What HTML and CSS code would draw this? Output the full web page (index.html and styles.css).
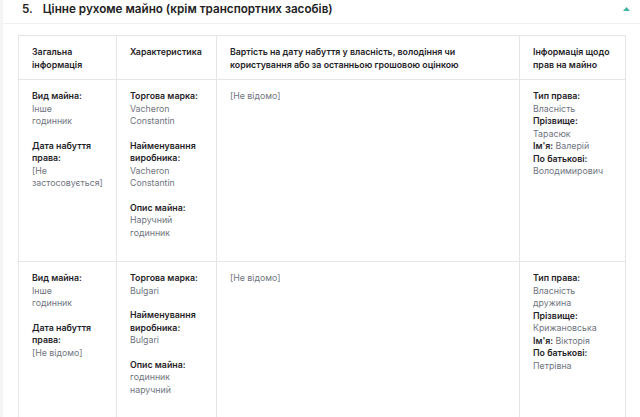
FILE: index.html
```html
<!DOCTYPE html>
<html lang="uk">
<head>
<meta charset="utf-8">
<link rel="stylesheet" href="styles.css">
</head>
<body>
<div class="page">
  <section class="card">
    <header class="card-head">
      <h2 class="title"><span class="num">5.</span>Цінне рухоме майно (крім транспортних засобів)</h2>
      <svg class="toggle" width="7" height="4" viewBox="0 0 7 4"><path d="M0 4 L3.5 0 L7 4 Z" fill="#3fb3a6"/></svg>
    </header>
    <div class="card-body">
      <table class="grid">
        <colgroup>
          <col class="c1"><col class="c2"><col class="c3"><col class="c4">
        </colgroup>
        <thead>
          <tr>
            <th>Загальна інформація</th>
            <th>Характеристика</th>
            <th>Вартість на дату набуття у власність, володіння чи користування або за останньою грошовою оцінкою</th>
            <th>Інформація щодо прав на майно</th>
          </tr>
        </thead>
        <tbody>
          <tr>
            <td>
              <div class="field stack"><span class="lbl">Вид майна:</span><span class="val">Інше<br>годинник</span></div>
              <div class="field stack"><span class="lbl">Дата набуття права:</span><span class="val">[Не застосовується]</span></div>
            </td>
            <td>
              <div class="field stack"><span class="lbl">Торгова марка:</span><span class="val">Vacheron Constantin</span></div>
              <div class="field stack"><span class="lbl">Найменування виробника:</span><span class="val">Vacheron Constantin</span></div>
              <div class="field stack"><span class="lbl">Опис майна:</span><span class="val">Наручний годинник</span></div>
            </td>
            <td><span class="val">[Не відомо]</span></td>
            <td>
              <div class="rights">
                <span class="lbl">Тип права:</span> <span class="val">Власність</span><br>
                <span class="lbl">Прізвище:</span> <span class="val">Тарасюк</span><br>
                <span class="lbl">Ім'я:</span> <span class="val">Валерій</span><br>
                <span class="lbl">По батькові:</span> <span class="val">Володимирович</span>
              </div>
            </td>
          </tr>
          <tr>
            <td>
              <div class="field stack"><span class="lbl">Вид майна:</span><span class="val">Інше<br>годинник</span></div>
              <div class="field stack"><span class="lbl">Дата набуття права:</span><span class="val">[Не відомо]</span></div>
            </td>
            <td>
              <div class="field stack"><span class="lbl">Торгова марка:</span><span class="val">Bulgari</span></div>
              <div class="field stack"><span class="lbl">Найменування виробника:</span><span class="val">Bulgari</span></div>
              <div class="field stack"><span class="lbl">Опис майна:</span><span class="val">годинник наручний</span></div>
            </td>
            <td><span class="val">[Не відомо]</span></td>
            <td>
              <div class="rights">
                <span class="lbl">Тип права:</span> <span class="val">Власність дружина</span><br>
                <span class="lbl">Прізвище:</span> <span class="val">Крижановська</span><br>
                <span class="lbl">Ім'я:</span> <span class="val">Вікторія</span><br>
                <span class="lbl">По батькові:</span> <span class="val">Петрівна</span>
              </div>
            </td>
          </tr>
        </tbody>
      </table>
    </div>
  </section>
</div>
</body>
</html>
```

FILE: styles.css
```css
* { box-sizing: border-box; }
html, body { margin: 0; padding: 0; }
body {
  background: #f3f4f6;
  font-family: Inter, "Noto Sans", sans-serif;
  color: #1f2328;
  overflow: hidden;
}
.page {
  padding-left: 3px;
}
.card {
  background: #fff;
  min-height: 417px;
}
.card-head {
  height: 24px;
  display: flex;
  align-items: flex-start;
  justify-content: space-between;
  padding: 1px 10px 0 19px;
  border-bottom: 1px solid #eef0f2;
}
.title {
  margin: 0;
  font-size: 11.7px;
  line-height: 16px;
  font-weight: 600;
  color: #222;
}
.num { margin-right: 10px; }
.toggle { margin-top: 6px; }
.card-body {
  padding: 11px 0 0 15px;
}
.grid {
  border-collapse: collapse;
  table-layout: fixed;
  width: 607px;
  font-size: 8.8px;
  line-height: 12.5px;
}
.c1 { width: 98px; }
.c2 { width: 100px; }
.c3 { width: 303px; }
.c4 { width: 106px; }
.grid th, .grid td {
  border: 1px solid #e4e6ea;
  padding: 10px 13px;
  text-align: left;
  vertical-align: top;
}
.grid th {
  font-weight: 600;
  color: #1f2328;
  padding-bottom: 8px;
}
.lbl {
  font-weight: 600;
  color: #1f2328;
}
.val {
  color: #6f7580;
}
.field { margin-bottom: 12px; }
.stack .lbl, .stack .val { display: block; }
```
